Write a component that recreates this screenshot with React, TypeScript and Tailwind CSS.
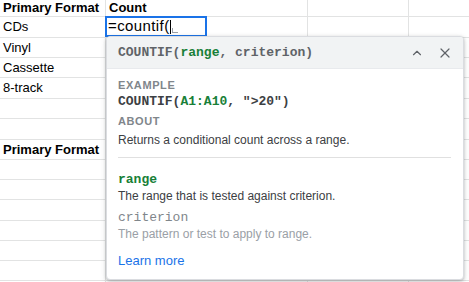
import React from "react";
import { ChevronUp, X } from "lucide-react";

const rows: { h: string; a: string; b: string; bold?: boolean }[] = [
  { h: "h-[17px]", a: "Primary Format", b: "Count", bold: true },
  { h: "h-[21px]", a: "CDs", b: "" },
  { h: "h-[20px]", a: "Vinyl", b: "" },
  { h: "h-[20px]", a: "Cassette", b: "" },
  { h: "h-[21px]", a: "8-track", b: "" },
  { h: "h-[20px]", a: "", b: "" },
  { h: "h-[21px]", a: "", b: "" },
  { h: "h-[20px]", a: "Primary Format", b: "", bold: true },
  { h: "h-[20px]", a: "", b: "" },
  { h: "h-[20px]", a: "", b: "" },
  { h: "h-[21px]", a: "", b: "" },
  { h: "h-[20px]", a: "", b: "" },
  { h: "h-[20px]", a: "", b: "" },
  { h: "h-[20px]", a: "", b: "" },
  { h: "h-[20px]", a: "", b: "" },
];

const mono = "font-['Liberation_Mono','DejaVu_Sans_Mono',monospace]";
const sans = "font-['Liberation_Sans',Arial,sans-serif]";

export default function App() {
  return (
    <div className={`relative w-[469px] h-[282px] overflow-hidden bg-white ${sans}`}>
      <div className="flex flex-col">
        {rows.map((r, i) => (
          <div key={i} className={`flex ${r.h} border-b border-[#e2e3e3] shrink-0`}>
            <div
              className={`w-[106px] shrink-0 border-r border-[#e2e3e3] flex items-center pl-[3px] text-[13px] text-black ${r.bold ? "font-bold" : ""}`}
            >
              {r.a}
            </div>
            <div
              className={`w-[202px] shrink-0 border-r border-[#e2e3e3] flex items-center pl-[3px] text-[13px] text-black ${r.bold ? "font-bold" : ""}`}
            >
              {r.b}
            </div>
            <div className="w-[101px] shrink-0 border-r border-[#e2e3e3]" />
            <div className="flex-1" />
          </div>
        ))}
      </div>

      {/* active cell editor */}
      <div className="absolute left-[105px] top-[16px] w-[102px] h-[21px] border-2 border-[#1a73e8] bg-white flex items-center pl-[1px] text-[15px] tracking-[0.4px] text-black">
        <span>=countif(</span>
        <span className="w-px h-[14px] bg-black" />
        <span className="ml-[1px] mt-[7px] w-[6px] h-[5px] border-l border-b border-[#9aa0a6]" />
      </div>

      {/* function help popup */}
      <div className="absolute left-[106px] top-[36px] w-[358px] h-[244px] bg-white rounded-[4px] border border-[#dadce0] shadow-[0_1px_3px_rgba(60,64,67,0.3),0_2px_6px_rgba(60,64,67,0.15)] overflow-hidden flex flex-col">
        <div className="h-[32px] shrink-0 bg-[#f1f3f4] flex items-center pl-[11px] pr-[10px] border-b border-[#e8eaed]">
          <span className={`${mono} text-[13px] text-[#5f6368] font-bold pt-[1px]`}>
            COUNTIF(<span className="text-[#188038]">range</span>, criterion)
          </span>
          <div className="flex-1" />
          <ChevronUp size={14} strokeWidth={2} className="text-[#5f6368] mr-[13px]" />
          <X size={16} strokeWidth={1.8} className="text-[#5f6368]" />
        </div>
        <div className="flex flex-col px-[11px]">
          <div className="mt-[8px] h-[16px] leading-[16px] text-[11px] font-bold tracking-[0.6px] text-[#80868b]">
            EXAMPLE
          </div>
          <div className={`h-[16px] leading-[16px] pt-[1px] ${mono} text-[13px] font-bold text-[#3c4043]`}>
            COUNTIF(<span className="text-[#188038]">A1:A10</span>, "&gt;20")
          </div>
          <div className="mt-[4px] h-[16px] leading-[16px] text-[11px] font-bold tracking-[0.6px] text-[#80868b]">
            ABOUT
          </div>
          <div className="mt-[3px] h-[16px] leading-[16px] text-[12px] text-[#3c4043]">
            Returns a conditional count across a range.
          </div>
          <div className="mt-[9px] mr-[1px] h-px bg-[#e0e0e0]" />
          <div className={`mt-[14px] h-[16px] leading-[16px] ${mono} text-[13px] font-bold text-[#188038]`}>
            range
          </div>
          <div className="h-[16px] leading-[16px] text-[12px] text-[#3c4043]">
            The range that is tested against criterion.
          </div>
          <div className={`mt-[6px] h-[16px] leading-[16px] ${mono} text-[13px] text-[#80868b]`}>
            criterion
          </div>
          <div className="h-[16px] leading-[16px] text-[12px] text-[#9aa0a6]">
            The pattern or test to apply to range.
          </div>
          <div className="mt-[11px] h-[16px] leading-[16px] text-[13px] text-[#1a73e8]">
            Learn more
          </div>
        </div>
      </div>
    </div>
  );
}
